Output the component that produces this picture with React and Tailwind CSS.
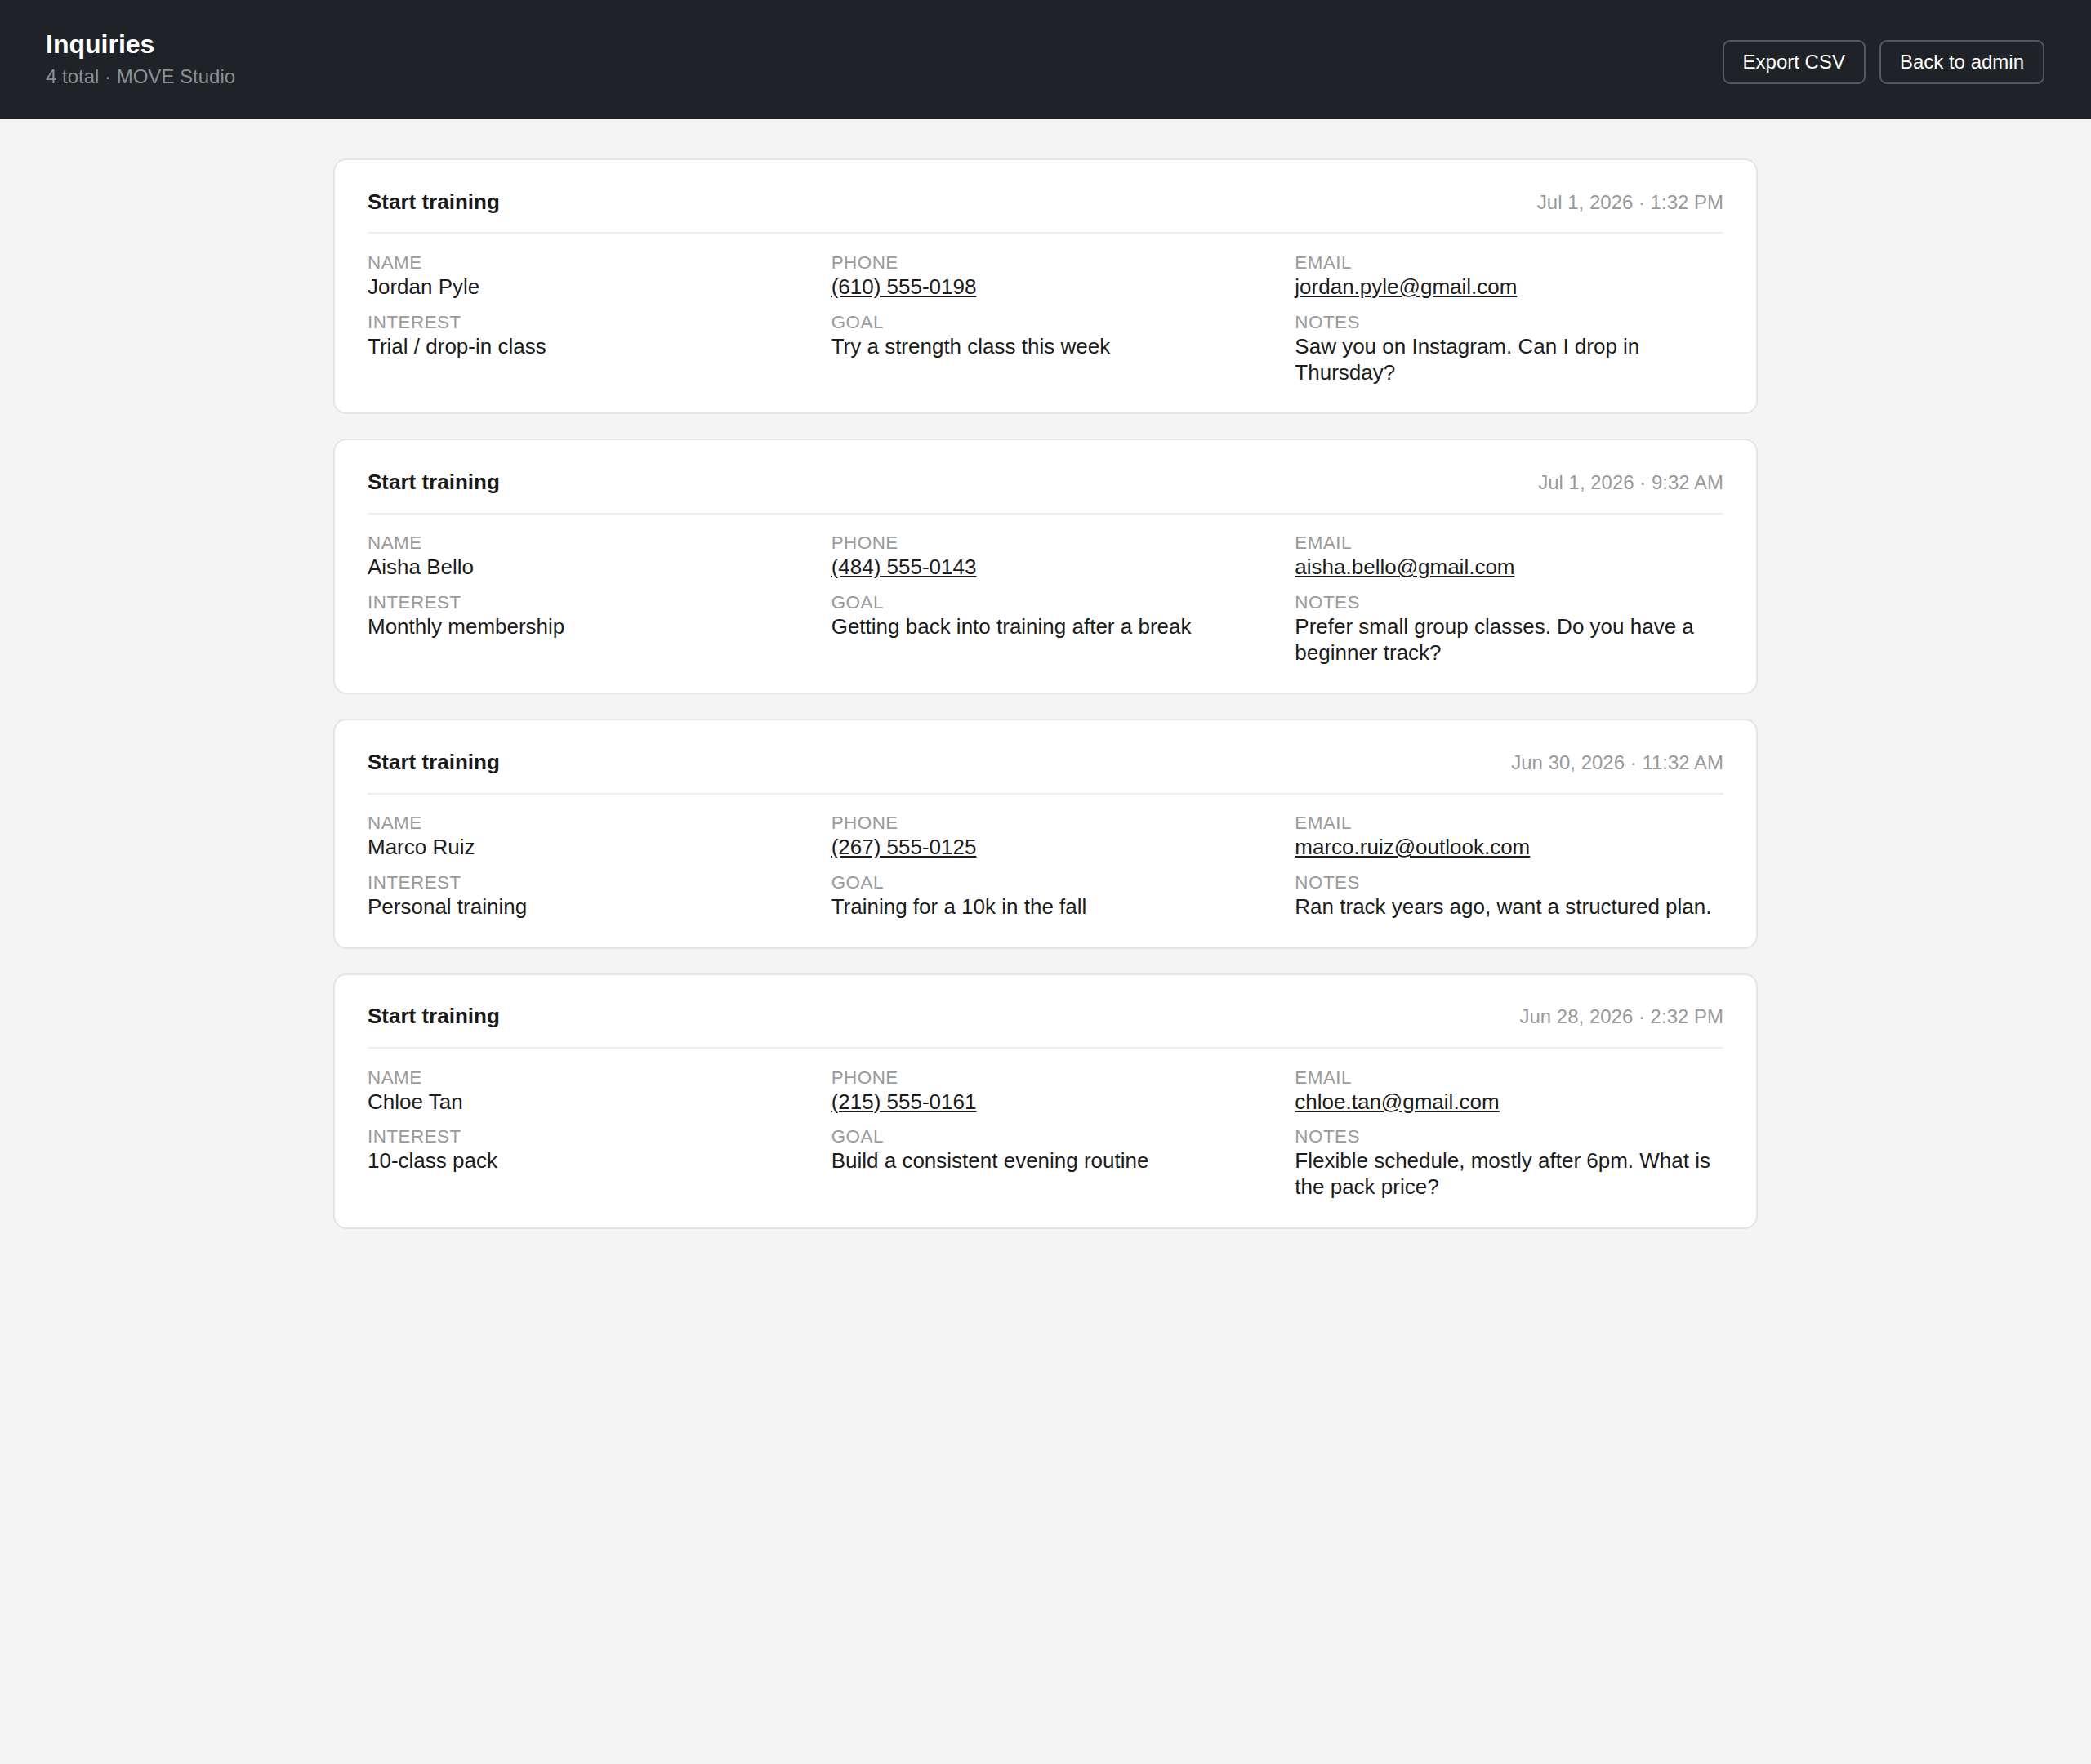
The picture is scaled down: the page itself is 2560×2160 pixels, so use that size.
import React from "react";

const inquiries = [
  {
    date: "Jul 1, 2026 · 1:32 PM",
    name: "Jordan Pyle",
    phone: "(610) 555-0198",
    email: "jordan.pyle@gmail.com",
    interest: "Trial / drop-in class",
    goal: "Try a strength class this week",
    notes: "Saw you on Instagram. Can I drop in Thursday?",
  },
  {
    date: "Jul 1, 2026 · 9:32 AM",
    name: "Aisha Bello",
    phone: "(484) 555-0143",
    email: "aisha.bello@gmail.com",
    interest: "Monthly membership",
    goal: "Getting back into training after a break",
    notes: "Prefer small group classes. Do you have a beginner track?",
  },
  {
    date: "Jun 30, 2026 · 11:32 AM",
    name: "Marco Ruiz",
    phone: "(267) 555-0125",
    email: "marco.ruiz@outlook.com",
    interest: "Personal training",
    goal: "Training for a 10k in the fall",
    notes: "Ran track years ago, want a structured plan.",
  },
  {
    date: "Jun 28, 2026 · 2:32 PM",
    name: "Chloe Tan",
    phone: "(215) 555-0161",
    email: "chloe.tan@gmail.com",
    interest: "10-class pack",
    goal: "Build a consistent evening routine",
    notes: "Flexible schedule, mostly after 6pm. What is the pack price?",
  },
];

function Field({ label, children }) {
  return (
    <div>
      <div className="text-[22.4px] leading-[26px] tracking-[0.5px] uppercase text-[#9a9a9a]">
        {label}
      </div>
      <div className="text-[26px] leading-[32px] text-[#1c1c1c]">{children}</div>
    </div>
  );
}

function InquiryCard({ item }) {
  return (
    <div className="bg-white border-2 border-[#e4e4e4] rounded-[16px] px-[40px] pt-[36.5px] pb-[33.5px]">
      {/* Cabecera de la tarjeta */}
      <div className="flex items-baseline justify-between pb-[22.5px] border-b-2 border-[#efefef]">
        <div className="text-[26px] leading-[29.4px] font-bold text-[#1a1a1a]">Start training</div>
        <div className="text-[24px] leading-[29.4px] text-[#999999]">{item.date}</div>
      </div>

      {/* Datos */}
      <div className="grid grid-cols-3 gap-x-[43px] gap-y-[14.8px] mt-[22.5px]">
        <Field label="Name">{item.name}</Field>
        <Field label="Phone">
          <a href="#" className="underline">{item.phone}</a>
        </Field>
        <Field label="Email">
          <a href="#" className="underline">{item.email}</a>
        </Field>
        <Field label="Interest">{item.interest}</Field>
        <Field label="Goal">{item.goal}</Field>
        <Field label="Notes">{item.notes}</Field>
      </div>
    </div>
  );
}

export default function App() {
  return (
    <div
      className="min-h-screen bg-[#f4f4f4]"
      style={{ fontFamily: '"Liberation Sans", Arial, sans-serif' }}
    >
      <header className="bg-[#1f2327] h-[146px] flex items-start justify-between pl-[56px] pr-[57px] pt-[36px]">
        <div>
          <h1 className="text-[32px] leading-[37px] font-bold text-white">Inquiries</h1>
          <div className="mt-[7px] text-[24px] leading-[28px] text-[#8d9094]">4 total · MOVE Studio</div>
        </div>
        <div className="flex gap-[17px] mt-[13px]">
          <button className="border-2 border-[#55595d] rounded-[9px] px-[23px] py-[11px] text-[24px] leading-[28px] text-white">
            Export CSV
          </button>
          <button className="border-2 border-[#55595d] rounded-[9px] px-[23px] py-[11px] text-[24px] leading-[28px] text-white">
            Back to admin
          </button>
        </div>
      </header>

      <main className="max-w-[1744px] mx-auto pt-[48px] pb-[48px] flex flex-col gap-[30px]">
        {inquiries.map((item) => (
          <InquiryCard key={item.email} item={item} />
        ))}
      </main>
    </div>
  );
}
